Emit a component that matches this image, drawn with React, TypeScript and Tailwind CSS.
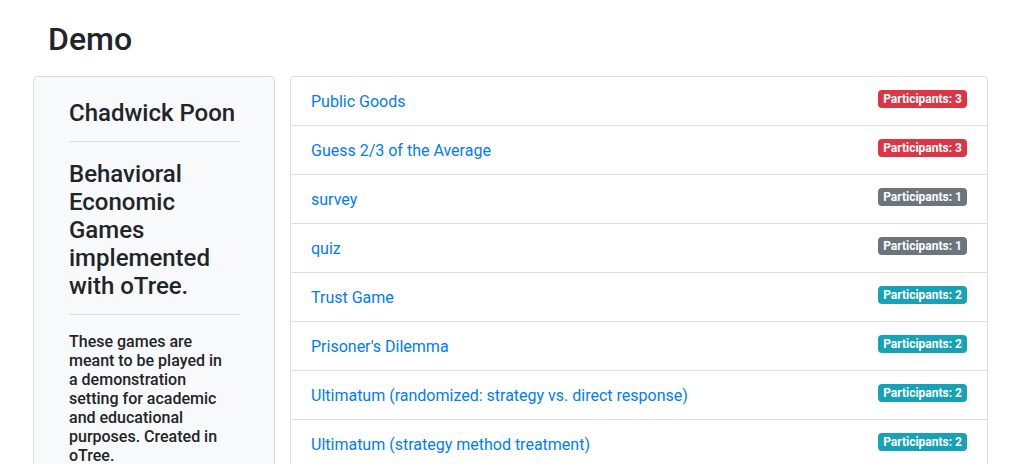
const games = [
  { name: 'Public Goods', n: 3, color: 'bg-[#dc3545]' },
  { name: 'Guess 2/3 of the Average', n: 3, color: 'bg-[#dc3545]' },
  { name: 'survey', n: 1, color: 'bg-[#6c757d]' },
  { name: 'quiz', n: 1, color: 'bg-[#6c757d]' },
  { name: 'Trust Game', n: 2, color: 'bg-[#17a2b8]' },
  { name: "Prisoner's Dilemma", n: 2, color: 'bg-[#17a2b8]' },
  { name: 'Ultimatum (randomized: strategy vs. direct response)', n: 2, color: 'bg-[#17a2b8]' },
  { name: 'Ultimatum (strategy method treatment)', n: 2, color: 'bg-[#17a2b8]' },
];

export default function App() {
  return (
    <div className="min-h-screen bg-white font-['Roboto',sans-serif] text-[#212529] overflow-hidden h-[464px]">
      {/* Header */}
      <div className="pl-[48px] pt-[20px] mb-[18px]">
        <h2 className="text-[32px] leading-[38px] font-medium">Demo</h2>
      </div>

      <div className="flex gap-[15px] pl-[33px]">
        {/* Sidebar */}
        <div className="w-[242px] shrink-0 bg-[#f8f9fa] border border-[#dcdcdc] rounded-[4px] px-[35px] pt-[22px] h-[420px]">
          <h4 className="text-[24px] leading-[28px] font-medium">Chadwick Poon</h4>
          <hr className="border-t border-[#dcdde0] mt-[14px] mb-[18px]" />
          <h4 className="text-[24px] leading-[28px] font-medium">
            Behavioral Economic Games implemented with oTree.
          </h4>
          <hr className="border-t border-[#dcdde0] mt-[14px] mb-[17px]" />
          <h6 className="text-[16px] leading-[19px] font-medium">
            These games are<br />
            meant to be played in<br />
            a demonstration<br />
            setting for academic<br />
            and educational<br />
            purposes. Created in<br />
            oTree.
          </h6>
        </div>

        {/* Game list */}
        <div className="w-[698px] shrink-0 border border-[#dfdfdf] rounded-[4px] bg-white">
          {games.map((g, i) => (
            <div
              key={g.name}
              className={`flex justify-between items-start px-[20px] py-[12px] ${i > 0 ? 'border-t border-[#dfdfdf]' : ''}`}
            >
              <a href="#" className="text-[16px] leading-[24px] text-[#007bff] pt-[1px] -mb-[1px]">
                {g.name}
              </a>
              <span
                className={`${g.color} text-white text-[12px] leading-[12px] font-bold rounded-[4px] px-[5px] py-[3px] mt-[1px]`}
              >
                Participants: {g.n}
              </span>
            </div>
          ))}
        </div>
      </div>
    </div>
  );
}
